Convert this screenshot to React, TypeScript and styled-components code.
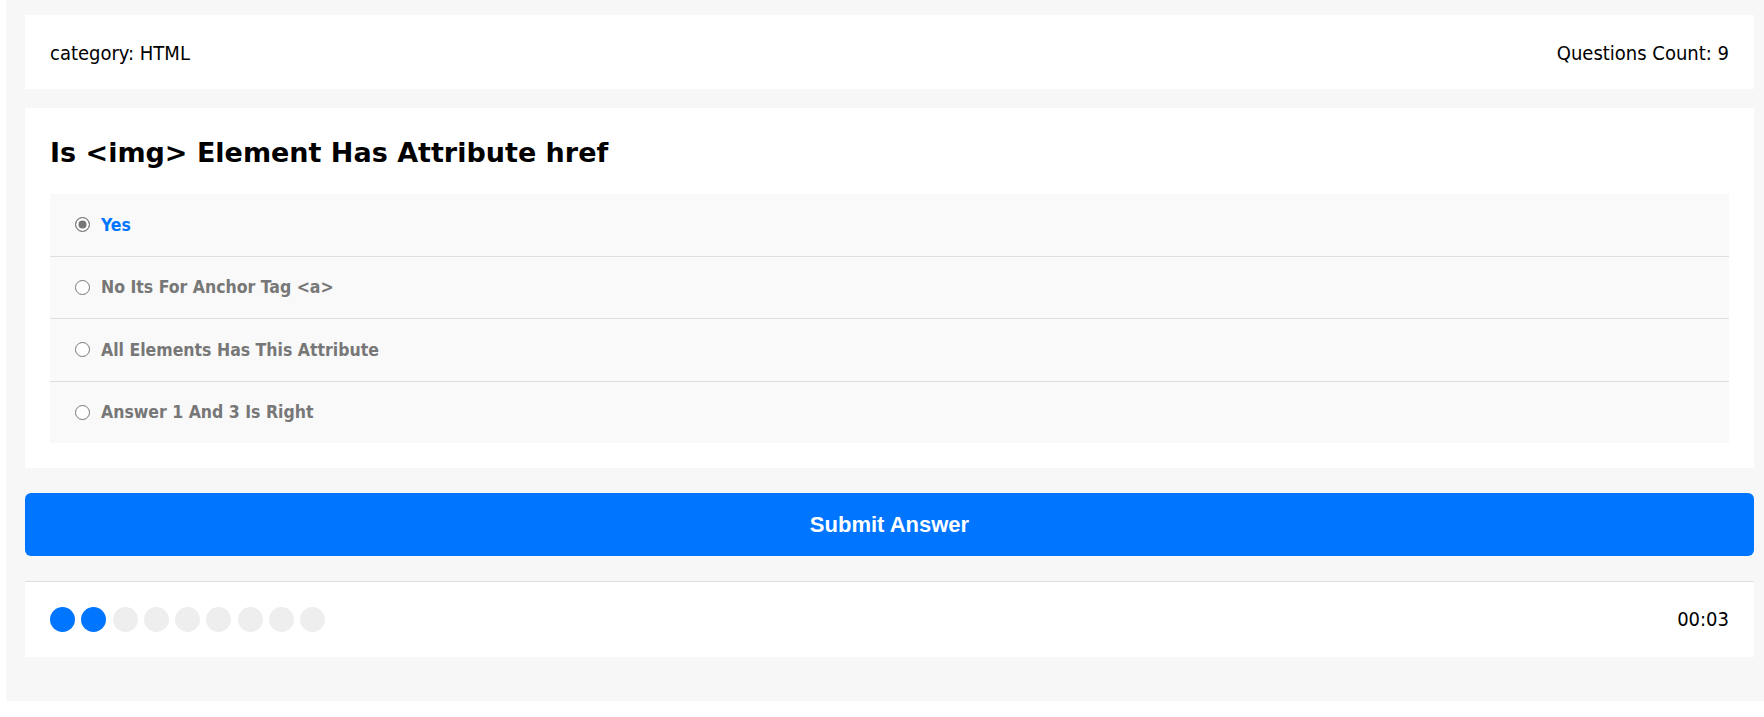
import React, { useState } from "react";
import styled, { createGlobalStyle } from "styled-components";

const GlobalStyle = createGlobalStyle`
  html, body {
    margin: 0;
    padding: 0;
    background: #ffffff;
  }
  body {
    font-family: "DejaVu Sans Condensed", "DejaVu Sans", sans-serif;
    font-stretch: condensed;
    color: #000;
  }
  *, *::before, *::after {
    box-sizing: border-box;
  }
`;

const Page = styled.div`
  margin-left: 6px;
  padding: 15px 10px 44px 19px;
  background: #f7f7f7;
`;

const InfoBar = styled.div`
  display: flex;
  justify-content: space-between;
  align-items: center;
  background: #ffffff;
  padding: 25px 25px 23px;
  font-size: 20px;
  line-height: 26px;
`;

const QuestionCard = styled.section`
  margin-top: 19px;
  background: #ffffff;
  padding: 25px;
`;

const Title = styled.h2`
  margin: 0 0 21px;
  font-family: "DejaVu Sans", sans-serif;
  font-stretch: normal;
  font-size: 27px;
  line-height: 40px;
  font-weight: 700;
  color: #000;
`;

const Options = styled.div`
  background: #f9f9f9;
`;

const Option = styled.label<{ $selected?: boolean }>`
  box-sizing: content-box;
  display: flex;
  align-items: center;
  height: 61.5px;
  padding: 0 25px;
  border-bottom: 1px solid #dedede;
  font-size: 17.5px;
  font-weight: 700;
  color: ${(p) => (p.$selected ? "#0075ff" : "#777777")};
  cursor: pointer;

  &:last-child {
    border-bottom: none;
  }
`;

const Radio = styled.input`
  appearance: none;
  -webkit-appearance: none;
  margin: 0 11px 0 0;
  width: 15px;
  height: 15px;
  border: 1px solid #767676;
  border-radius: 50%;
  background: #ffffff;
  flex: none;

  &:checked {
    background: #767676;
    box-shadow: inset 0 0 0 2.5px #ffffff;
  }
`;

const SubmitButton = styled.button`
  display: block;
  width: 100%;
  height: 63px;
  margin-top: 25px;
  border: none;
  border-radius: 6px;
  background: #0075ff;
  color: #ffffff;
  font-family: "Liberation Sans", Arial, sans-serif;
  font-size: 22px;
  font-weight: 700;
  cursor: pointer;
`;

const Footer = styled.div`
  margin-top: 25px;
  background: #ffffff;
  border-top: 1px solid #dedede;
  padding: 25px;
  display: flex;
  justify-content: space-between;
  align-items: center;
`;

const Bullets = styled.div`
  display: flex;
  gap: 6.25px;
`;

const Bullet = styled.span<{ $on?: boolean }>`
  width: 25px;
  height: 25px;
  border-radius: 50%;
  background: ${(p) => (p.$on ? "#0075ff" : "#eeeeee")};
`;

const Timer = styled.div`
  font-size: 20px;
  line-height: 25px;
`;

const answers = [
  "Yes",
  "No Its For Anchor Tag <a>",
  "All Elements Has This Attribute",
  "Answer 1 And 3 Is Right",
];

export default function App() {
  const [selected, setSelected] = useState(0);
  const total = 9;
  const current = 2;

  return (
    <>
      <GlobalStyle />
      <Page>
        <InfoBar>
          <span>category: HTML</span>
          <span>Questions Count: {total}</span>
        </InfoBar>
        <QuestionCard>
          <Title>{"Is <img> Element Has Attribute href"}</Title>
          <Options>
            {answers.map((a, i) => (
              <Option key={a} $selected={selected === i}>
                <Radio
                  type="radio"
                  name="question"
                  checked={selected === i}
                  onChange={() => setSelected(i)}
                />
                {a}
              </Option>
            ))}
          </Options>
        </QuestionCard>
        <SubmitButton>Submit Answer</SubmitButton>
        <Footer>
          <Bullets>
            {Array.from({ length: total }).map((_, i) => (
              <Bullet key={i} $on={i < current} />
            ))}
          </Bullets>
          <Timer>00:03</Timer>
        </Footer>
      </Page>
    </>
  );
}
